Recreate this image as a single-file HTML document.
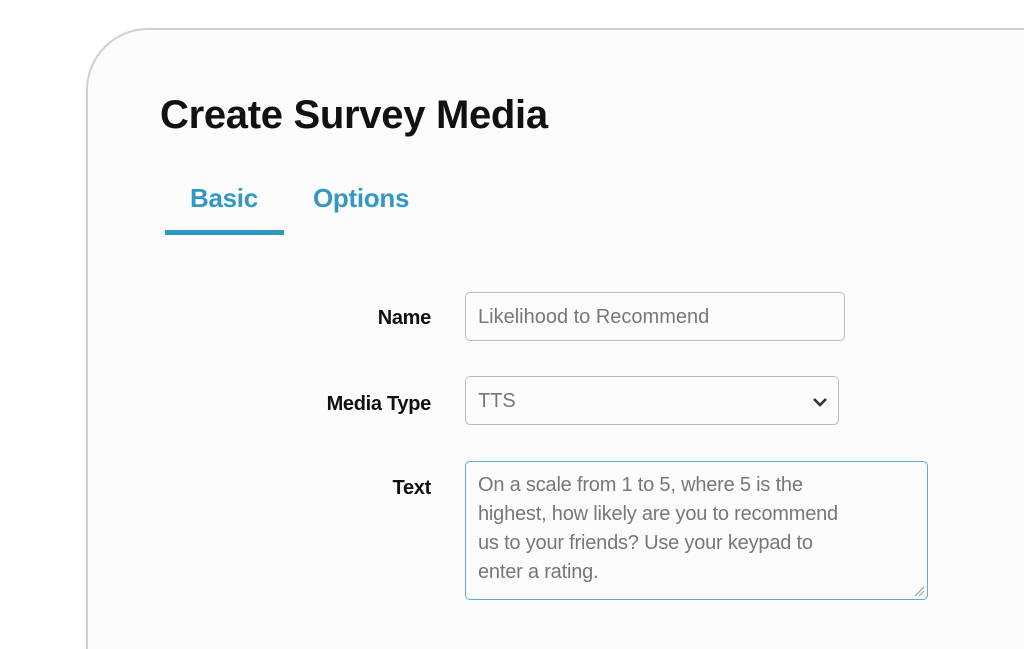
<!DOCTYPE html>
<html><head><style>
html,body{margin:0;width:1024px;height:649px;overflow:hidden}
body{background:#fff;font-family:"Liberation Sans",sans-serif;position:relative}
.card{position:absolute;left:86px;top:28px;width:1000px;height:800px;border:2px solid #d0d0d0;border-radius:62px;background:#fcfcfc}
h1{position:absolute;left:160px;top:93px;margin:0;font-size:40px;font-weight:bold;color:#111;letter-spacing:-0.3px}
.tab{position:absolute;top:183px;font-size:26px;color:#3399c4;font-weight:bold;letter-spacing:-0.3px}
.ul{position:absolute;left:165px;top:230px;width:119px;height:5px;background:#2f97c1}
.lab{position:absolute;right:593px;font-size:20px;font-weight:bold;color:#111;letter-spacing:-0.3px}
.box{position:absolute;box-sizing:border-box;border:1.5px solid #bbb;border-radius:5px;background:#fcfcfc;font-size:20px;color:#777;padding-left:12px;white-space:nowrap}
</style></head><body>
<div class="card"></div>
<h1>Create Survey Media</h1>
<div class="tab" style="left:190px">Basic</div>
<div class="tab" style="left:313px">Options</div>
<div class="ul"></div>
<div class="lab" style="top:307px">Name</div>
<div class="lab" style="top:393px">Media Type</div>
<div class="lab" style="top:477px">Text</div>
<div class="box" style="left:465px;top:292px;width:380px;height:49px;line-height:49px">Likelihood to Recommend</div>
<div class="box" style="left:465px;top:376px;width:374px;height:49px;line-height:49px">TTS
<svg style="position:absolute;right:10px;top:19px" width="16" height="12" viewBox="0 0 16 12"><path d="M2 3l6 6 6-6" fill="none" stroke="#333" stroke-width="2.6"/></svg></div>
<div class="box" style="left:465px;top:461px;width:463px;height:139px;border-color:#5aaed3;line-height:29px;padding-top:9px;letter-spacing:-0.2px">On a scale from 1 to 5, where 5 is the<br>highest, how likely are you to recommend<br>us to your friends? Use your keypad to<br>enter a rating.
<svg style="position:absolute;right:2px;bottom:2px" width="12" height="12"><path d="M2 11L11 2M6 11L11 6" stroke="#999" stroke-width="1"/></svg></div>
</body></html>
